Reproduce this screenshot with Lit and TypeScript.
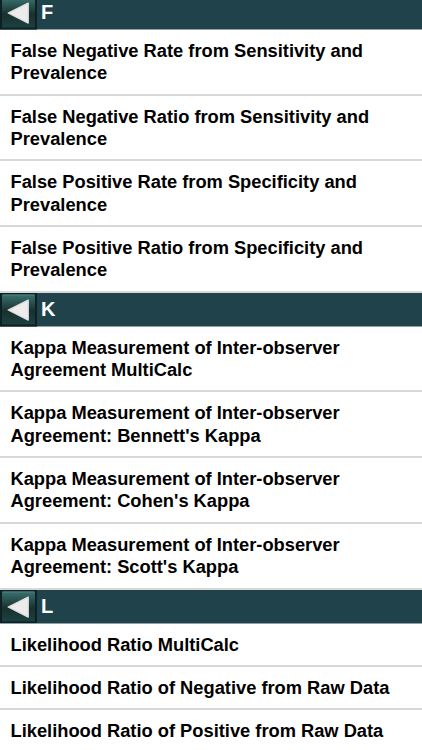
import { LitElement, html, css } from "lit";
import { customElement } from "lit/decorators.js";

interface Section {
  letter: string;
  items: string[][];
}

const SECTIONS: Section[] = [
  {
    letter: "F",
    items: [
      ["False Negative Rate from Sensitivity and", "Prevalence"],
      ["False Negative Ratio from Sensitivity and", "Prevalence"],
      ["False Positive Rate from Specificity and", "Prevalence"],
      ["False Positive Ratio from Specificity and", "Prevalence"],
    ],
  },
  {
    letter: "K",
    items: [
      ["Kappa Measurement of Inter-observer", "Agreement MultiCalc"],
      ["Kappa Measurement of Inter-observer", "Agreement: Bennett's Kappa"],
      ["Kappa Measurement of Inter-observer", "Agreement: Cohen's Kappa"],
      ["Kappa Measurement of Inter-observer", "Agreement: Scott's Kappa"],
    ],
  },
  {
    letter: "L",
    items: [
      ["Likelihood Ratio MultiCalc"],
      ["Likelihood Ratio of Negative from Raw Data"],
      ["Likelihood Ratio of Positive from Raw Data"],
    ],
  },
];

@customElement("app-root")
export class AppRoot extends LitElement {
  static styles = css`
    :host {
      display: block;
      height: 750px;
      overflow: hidden;
      background: #fff;
      color: #000;
      font-family: "Liberation Sans", Arial, sans-serif;
      font-weight: 700;
    }
    .list {
      margin-top: -3.9px;
    }
    .header {
      box-sizing: border-box;
      height: 33.7px;
      display: flex;
      background: #20424a;
      color: #fff;
      font-size: 20px;
      line-height: 32.6px;
      border-bottom: 1px solid #8fa1a5;
    }
    .back {
      display: block;
      flex: none;
      width: 37px;
      height: 33.6px;
      margin-right: 4px;
    }
    .row {
      box-sizing: border-box;
      height: 65.8px;
      padding: 10px 0 0 10.5px;
      border-bottom: 2px solid #d8d8d8;
      font-size: 18.3px;
      line-height: 22.2px;
      white-space: nowrap;
    }
    .row.single {
      height: 43.3px;
    }
    .line {
      display: block;
    }
  `;

  private arrow() {
    return html`<svg class="back" viewBox="0 0 37 34" preserveAspectRatio="none">
      <defs>
        <linearGradient id="face" x1="0" y1="0" x2="0" y2="1">
          <stop offset="0" stop-color="#397170" />
          <stop offset="0.28" stop-color="#28514f" />
          <stop offset="0.55" stop-color="#19302f" />
          <stop offset="1" stop-color="#1c4141" />
        </linearGradient>
      </defs>
      <rect width="37" height="34" fill="#0d2023" />
      <rect x="2" y="1.5" width="33" height="30.5" rx="1" fill="url(#face)" />
      <path d="M2.5 2H34.5" stroke="#5a8b89" stroke-width="0.8" />
      <path d="M8.2 17.2L28.2 7.2V27.4Z" fill="#ececec" stroke="#dedede" stroke-width="1.4" stroke-linejoin="round" />
    </svg>`;
  }

  render() {
    return html`<div class="list">
      ${SECTIONS.map(
        (s) => html`<section>
          <div class="header">${this.arrow()}<span>${s.letter}</span></div>
          ${s.items.map(
            (lines) => html`<div class="row ${lines.length === 1 ? "single" : ""}">
              ${lines.map((l) => html`<span class="line">${l}</span>`)}
            </div>`
          )}
        </section>`
      )}
    </div>`;
  }
}
